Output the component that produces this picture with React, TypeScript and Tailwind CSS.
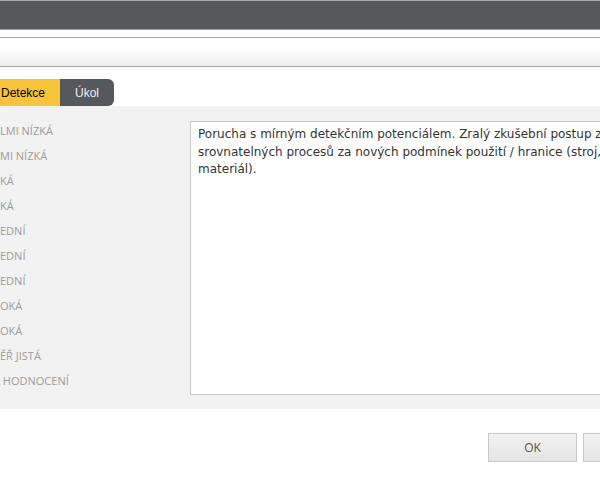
// Dialog for choosing the detection rating

const labels = [
  "LMI NÍZKÁ",
  "MI NÍZKÁ",
  "KÁ",
  "KÁ",
  "EDNÍ",
  "EDNÍ",
  "EDNÍ",
  "OKÁ",
  "OKÁ",
  "ĚŘ JISTÁ",
  " HODNOCENÍ",
];

const App = () => {
  return (
    <div className="w-[600px] h-[478px] overflow-hidden bg-white flex flex-col font-['Liberation_Sans',Arial,sans-serif]">
      {/* title bar */}
      <div className="h-[30px] shrink-0 bg-[#55595e] border-t border-t-[#a8a8a8] border-b border-b-[#9a9a9a]" />

      {/* toolbar strip */}
      <div className="mt-[7px] h-[30px] shrink-0 border-y border-[#aaaaaa] bg-gradient-to-b from-white from-40% to-[#ececec]" />

      {/* tabs */}
      <div className="mt-[12px] flex h-[27px] shrink-0 text-[12px]">
        <div className="-ml-[14px] px-[15px] flex items-center bg-[#f7c33a] text-black rounded-l-[6px]">
          Detekce
        </div>
        <div className="px-[15px] flex items-center bg-[#55595e] text-[#eef0f2] rounded-r-[6px]">
          Úkol
        </div>
      </div>

      {/* content panel */}
      <div className="h-[303px] shrink-0 bg-[#f2f2f2] flex">
        <div className="w-[190px] shrink-0 pt-[13px] flex flex-col font-['Open_Sans',sans-serif] text-[11px] font-medium text-[#9c9c9c]">
          {labels.map((l, i) => (
            <div key={i} className="h-[25px] flex items-center whitespace-pre">
              {l}
            </div>
          ))}
        </div>
        <div className="mt-[15px] h-[274px] flex-1 min-w-0 bg-white border border-[#c8c8c8] border-r-0 pl-[7px] pt-[4px] overflow-hidden">
          <p className="whitespace-nowrap font-['DejaVu_Sans',Verdana,sans-serif] text-[12px] leading-[17.5px] text-[#333]">
            Porucha s mírným detekčním potenciálem. Zralý zkušební postup ze
            <br />
            srovnatelných procesů za nových podmínek použití / hranice (stroj,
            <br />
            materiál).
          </p>
        </div>
      </div>

      {/* buttons */}
      <div className="mt-[24px] flex gap-[6px] pl-[488px] font-['Open_Sans',sans-serif] text-[12px] text-[#555]">
        <button className="w-[89px] h-[29px] shrink-0 border border-[#c8c8c8] bg-gradient-to-b from-[#f2f2f2] to-[#e4e4e4]">
          OK
        </button>
        <button className="w-[89px] h-[29px] shrink-0 border border-[#c8c8c8] bg-gradient-to-b from-[#f2f2f2] to-[#e4e4e4]">
          Zrušit
        </button>
      </div>
    </div>
  );
};

export default App;
